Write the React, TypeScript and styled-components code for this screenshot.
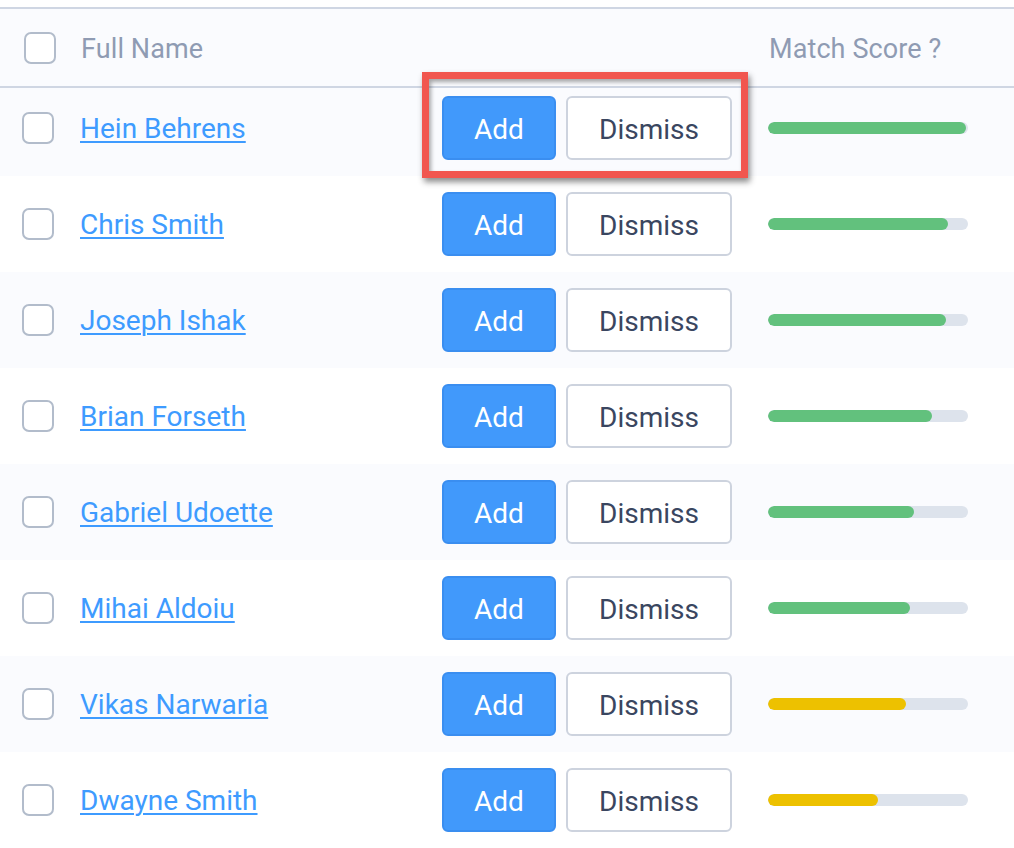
import styled, { createGlobalStyle } from 'styled-components'

const GlobalStyle = createGlobalStyle`
  body {
    margin: 0;
    background: #ffffff;
    font-family: Roboto, "Liberation Sans", sans-serif;
  }
`

const candidates = [
  { name: 'Hein Behrens', score: 99 },
  { name: 'Chris Smith', score: 90 },
  { name: 'Joseph Ishak', score: 89 },
  { name: 'Brian Forseth', score: 82 },
  { name: 'Gabriel Udoette', score: 73 },
  { name: 'Mihai Aldoiu', score: 71 },
  { name: 'Vikas Narwaria', score: 69 },
  { name: 'Dwayne Smith', score: 55 }
]

const Table = styled.div`
  padding-top: 7px;
  width: 1014px;
`

const HeaderRow = styled.div`
  display: grid;
  grid-template-columns: 57px 688px 1fr;
  align-items: center;
  height: 77px;
  padding-left: 24px;
  background: #fafbfe;
  border-top: 2px solid #cfd6e3;
  border-bottom: 2px solid #cfd6e3;
`

const HeaderLabel = styled.div`
  font-size: 27px;
  color: #8f9bb3;
  letter-spacing: 0.1px;
  padding-top: 2px;
`

const Row = styled.div<{ $striped: boolean; $first?: boolean }>`
  position: relative;
  display: grid;
  grid-template-columns: 58px 362px 326px 1fr;
  align-items: center;
  height: ${p => (p.$first ? '80px' : '96px')};
  padding-bottom: ${p => (p.$first ? '8px' : '0')};
  padding-left: 22px;
  background: ${p => (p.$striped ? '#fafbfe' : '#ffffff')};
`

const Checkbox = styled.span`
  display: block;
  width: 28px;
  height: 28px;
  border: 2px solid #b2bccb;
  border-radius: 7px;
  background: #ffffff;
`

const NameLink = styled.a`
  font-size: 28px;
  color: #3e9bff;
  text-decoration: underline;
  text-underline-offset: 3px;
  text-decoration-thickness: 2px;
  cursor: pointer;
`

const Actions = styled.div`
  display: flex;
  gap: 10px;
`

const Button = styled.button<{ $primary?: boolean }>`
  height: 64px;
  width: ${p => (p.$primary ? '114px' : '166px')};
  padding: 2px 0 0;
  border-radius: 6px;
  font-family: inherit;
  font-size: 28px;
  cursor: pointer;
  border: 2px solid ${p => (p.$primary ? '#3a8ef0' : '#cdd3de')};
  background: ${p => (p.$primary ? '#4199fb' : '#ffffff')};
  color: ${p => (p.$primary ? '#ffffff' : '#3a4660')};
`

const Track = styled.div`
  width: 200px;
  height: 12px;
  border-radius: 6px;
  background: #dde3ec;
  overflow: hidden;
`

const Fill = styled.div<{ $tone: 'green' | 'yellow' }>`
  height: 100%;
  border-radius: 6px;
  background: ${p => (p.$tone === 'green' ? '#62c17d' : '#edc100')};
`

const Highlight = styled.div`
  position: absolute;
  z-index: 1;
  left: 422px;
  top: -16px;
  width: 312px;
  height: 92px;
  border: 7px solid #f1564f;
  box-shadow: 2px 4px 6px rgba(0, 0, 0, 0.45), inset 2px 3px 4px rgba(0, 0, 0, 0.35);
  pointer-events: none;
`

function App () {
  return (
    <>
      <GlobalStyle />
      <Table>
        <HeaderRow>
          <Checkbox />
          <HeaderLabel>Full Name</HeaderLabel>
          <HeaderLabel>Match Score ?</HeaderLabel>
        </HeaderRow>
        {candidates.map((c, i) => (
          <Row key={c.name} $striped={i % 2 === 0} $first={i === 0}>
            <Checkbox />
            <div>
              <NameLink>{c.name}</NameLink>
            </div>
            <Actions>
              <Button $primary>Add</Button>
              <Button>Dismiss</Button>
            </Actions>
            <Track>
              <Fill $tone={c.score >= 70 ? 'green' : 'yellow'} style={{ width: `${c.score}%` }} />
            </Track>
            {i === 0 && <Highlight />}
          </Row>
        ))}
      </Table>
    </>
  )
}

export default App
